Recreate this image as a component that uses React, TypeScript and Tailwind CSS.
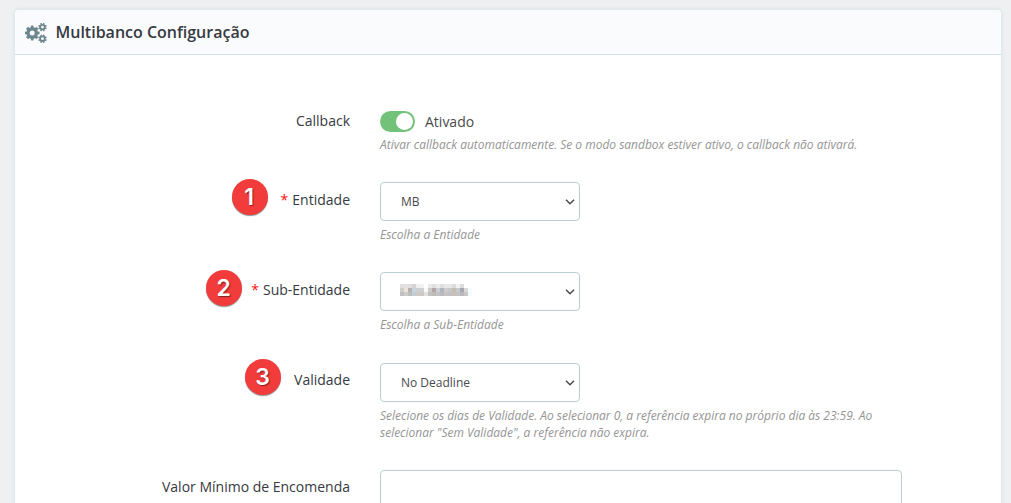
import type { ReactNode } from "react";

const MOSAIC = [
  ["#dfdfe0", "#e6e0e4", "#dfdfe1", "#d3d4d6", "#eeeeef", "#f2f2f3", "#ffffff", "#e8e8e9", "#e0e0e2", "#ececed", "#e0e0e0", "#ebe7e8", "#e6e8e8", "#dcdcde", "#f3f1f2", "#dcdcde", "#ffffff"],
  ["#cfcdcb", "#ece5d6", "#b4b0b3", "#c7d6da", "#cdced1", "#d1d0cf", "#f8faf9", "#cbcaca", "#b3a7a5", "#cccfce", "#acb7c2", "#cfcdcc", "#c3c8ca", "#c6bdae", "#c6cbd0", "#a7a7b0", "#dad9d7"],
  ["#c0c0c0", "#cdcbca", "#bdbdbd", "#c1cdcf", "#d0c8c3", "#c8c8c8", "#dfe0df", "#c2c1c1", "#c0bbb7", "#bfc1c2", "#b9bbbd", "#c5c3c3", "#c1c1c3", "#c8c1ba", "#c3c3c3", "#b8b8bf", "#cac6c6"],
];

function Mosaic() {
  return (
    <svg width="72" height="12" viewBox="0 0 72 12" shapeRendering="crispEdges" className="mb-[3px] -ml-px block" aria-hidden="true">
      {MOSAIC.map((row, y) =>
        row.map((fill, x) => <rect key={`${x}-${y}`} x={x * 4} y={y * 4} width="4" height="4" fill={fill} />),
      )}
      <rect x="68" y="4" width="4" height="8" fill="#f2fbff" />
    </svg>
  );
}

function Gears() {
  return (
    <svg width="22" height="20" viewBox="0 0 22 20" fill="none" stroke="#6c868e" className="mr-[8.5px] block shrink-0" aria-hidden="true">
      <circle cx="7.2" cy="10" r="4.2" strokeWidth="3.4" />
      <circle cx="7.2" cy="10" r="6.3" strokeWidth="2.2" pathLength="16" strokeDasharray="1.1 0.9" strokeDashoffset="0.55" />
      <circle cx="17.5" cy="4.1" r="2.3" strokeWidth="1.8" />
      <circle cx="17.5" cy="4.1" r="3.5" strokeWidth="1.6" pathLength="16" strokeDasharray="1.1 0.9" strokeDashoffset="1.55" />
      <circle cx="17.5" cy="15.7" r="2.3" strokeWidth="1.8" />
      <circle cx="17.5" cy="15.7" r="3.5" strokeWidth="1.6" pathLength="16" strokeDasharray="1.1 0.9" strokeDashoffset="1.55" />
    </svg>
  );
}

function Select({ children }: { children: ReactNode }) {
  return (
    <button type="button" className="flex h-[39px] w-[200px] items-center justify-between rounded-[4px] border border-[#bbcdd2] bg-white pr-1 pl-5 text-left text-[12px] text-[#4a4a4e]">
      <span>{children}</span>
      <svg width="10" height="6" viewBox="0 0 10 6" fill="none" stroke="#4a4a4e" strokeWidth="1.5" className="mt-px block">
        <path d="M1 .8 5 4.7 9 .8" />
      </svg>
    </button>
  );
}

function Badge({ n, className }: { n: number; className: string }) {
  return (
    <span className={`flex size-9 shrink-0 items-center justify-center rounded-full bg-[#f23c3c] pr-px font-['Inter',sans-serif] text-[23px] leading-none font-semibold text-white shadow-[0_1px_1px_rgba(0,0,0,0.45)] [text-shadow:1px_1px_1px_rgba(0,0,0,0.45)] ${className}`}>
      {n}
    </span>
  );
}

type RowProps = {
  label: string;
  badge?: number;
  badgeClass?: string;
  required?: boolean;
  className: string;
  labelClass: string;
  children: ReactNode;
};

function Row({ label, badge, badgeClass = "", required, className, labelClass, children }: RowProps) {
  return (
    <div className={`flex shrink-0 items-start ${className}`}>
      <div className={`mr-[30px] flex h-5 w-[335px] items-center justify-end text-[14px] leading-5 whitespace-nowrap text-[#363a41] ${labelClass}`}>
        {badge !== undefined && <Badge n={badge} className={badgeClass} />}
        {required && <span className="mr-1 text-[#ff1010]">*</span>}
        <span>{label}</span>
      </div>
      <div className="w-[522px]">{children}</div>
    </div>
  );
}

function Help({ children, className }: { children: ReactNode; className: string }) {
  return <p className={`text-[12px] leading-[17px] text-[#959595] italic ${className}`}>{children}</p>;
}

export default function App() {
  return (
    <main className="h-[503px] overflow-hidden bg-[#eff0f2] pt-[10px] pr-[10px] pl-[15px] font-['Open_Sans',sans-serif]">
      <section className="flex h-[540px] flex-col rounded-[4px] bg-white shadow-[0_0_0_1px_#e0e9eb,0_0_4px_rgba(80,100,110,0.18)]">
        <header className="flex h-[45px] shrink-0 items-center rounded-t-[4px] border-b border-[#d3e2e6] bg-[#fafbfd] pt-px pl-[10px]">
          <Gears />
          <h1 className="-mt-px text-[16px] leading-5 font-semibold text-[#363a41]">Multibanco Configuração</h1>
        </header>

        <Row label="Callback" className="mt-14 h-[71px]" labelClass="">
          <div className="flex h-[21px] items-center">
            <span role="switch" aria-checked="true" className="flex h-[21px] w-[35px] items-center justify-end rounded-full bg-[#72c279] pr-[2px]">
              <span className="size-[17px] rounded-full bg-white" />
            </span>
            <span className="ml-[10px] text-[14px] text-[#4a4a4e]">Ativado</span>
          </div>
          <Help className="mt-1 tracking-[-0.01px]">Ativar callback automaticamente. Se o modo sandbox estiver ativo, o callback não ativará.</Help>
        </Row>

        <Row label="Entidade" badge={1} badgeClass="mr-[13px] mb-[6px]" required className="h-[90px]" labelClass="mt-2">
          <Select>MB</Select>
          <Help className="mt-[5px]">Escolha a Entidade</Help>
        </Row>

        <Row label="Sub-Entidade" badge={2} badgeClass="mr-[9px] mb-[4px]" required className="h-[91px]" labelClass="mt-2">
          <Select><Mosaic /></Select>
          <Help className="mt-[5px]">Escolha a Sub-Entidade</Help>
        </Row>

        <Row label="Validade" badge={3} badgeClass="mr-[13px] mb-[6px]" className="h-[107px]" labelClass="mt-[7px]">
          <Select>No Deadline</Select>
          <Help className="mt-[5px] tracking-[-0.01px]">
            Selecione os dias de Validade. Ao selecionar 0, a referência expira no próprio dia às 23:59. Ao selecionar "Sem Validade", a referência não expira.
          </Help>
        </Row>

        <Row label="Valor Mínimo de Encomenda" className="h-10" labelClass="mt-[7px]">
          <input aria-label="Valor Mínimo de Encomenda" className="block h-[39px] w-full rounded-[4px] border border-[#bbcdd2] bg-white px-4" />
        </Row>
      </section>
    </main>
  );
}
